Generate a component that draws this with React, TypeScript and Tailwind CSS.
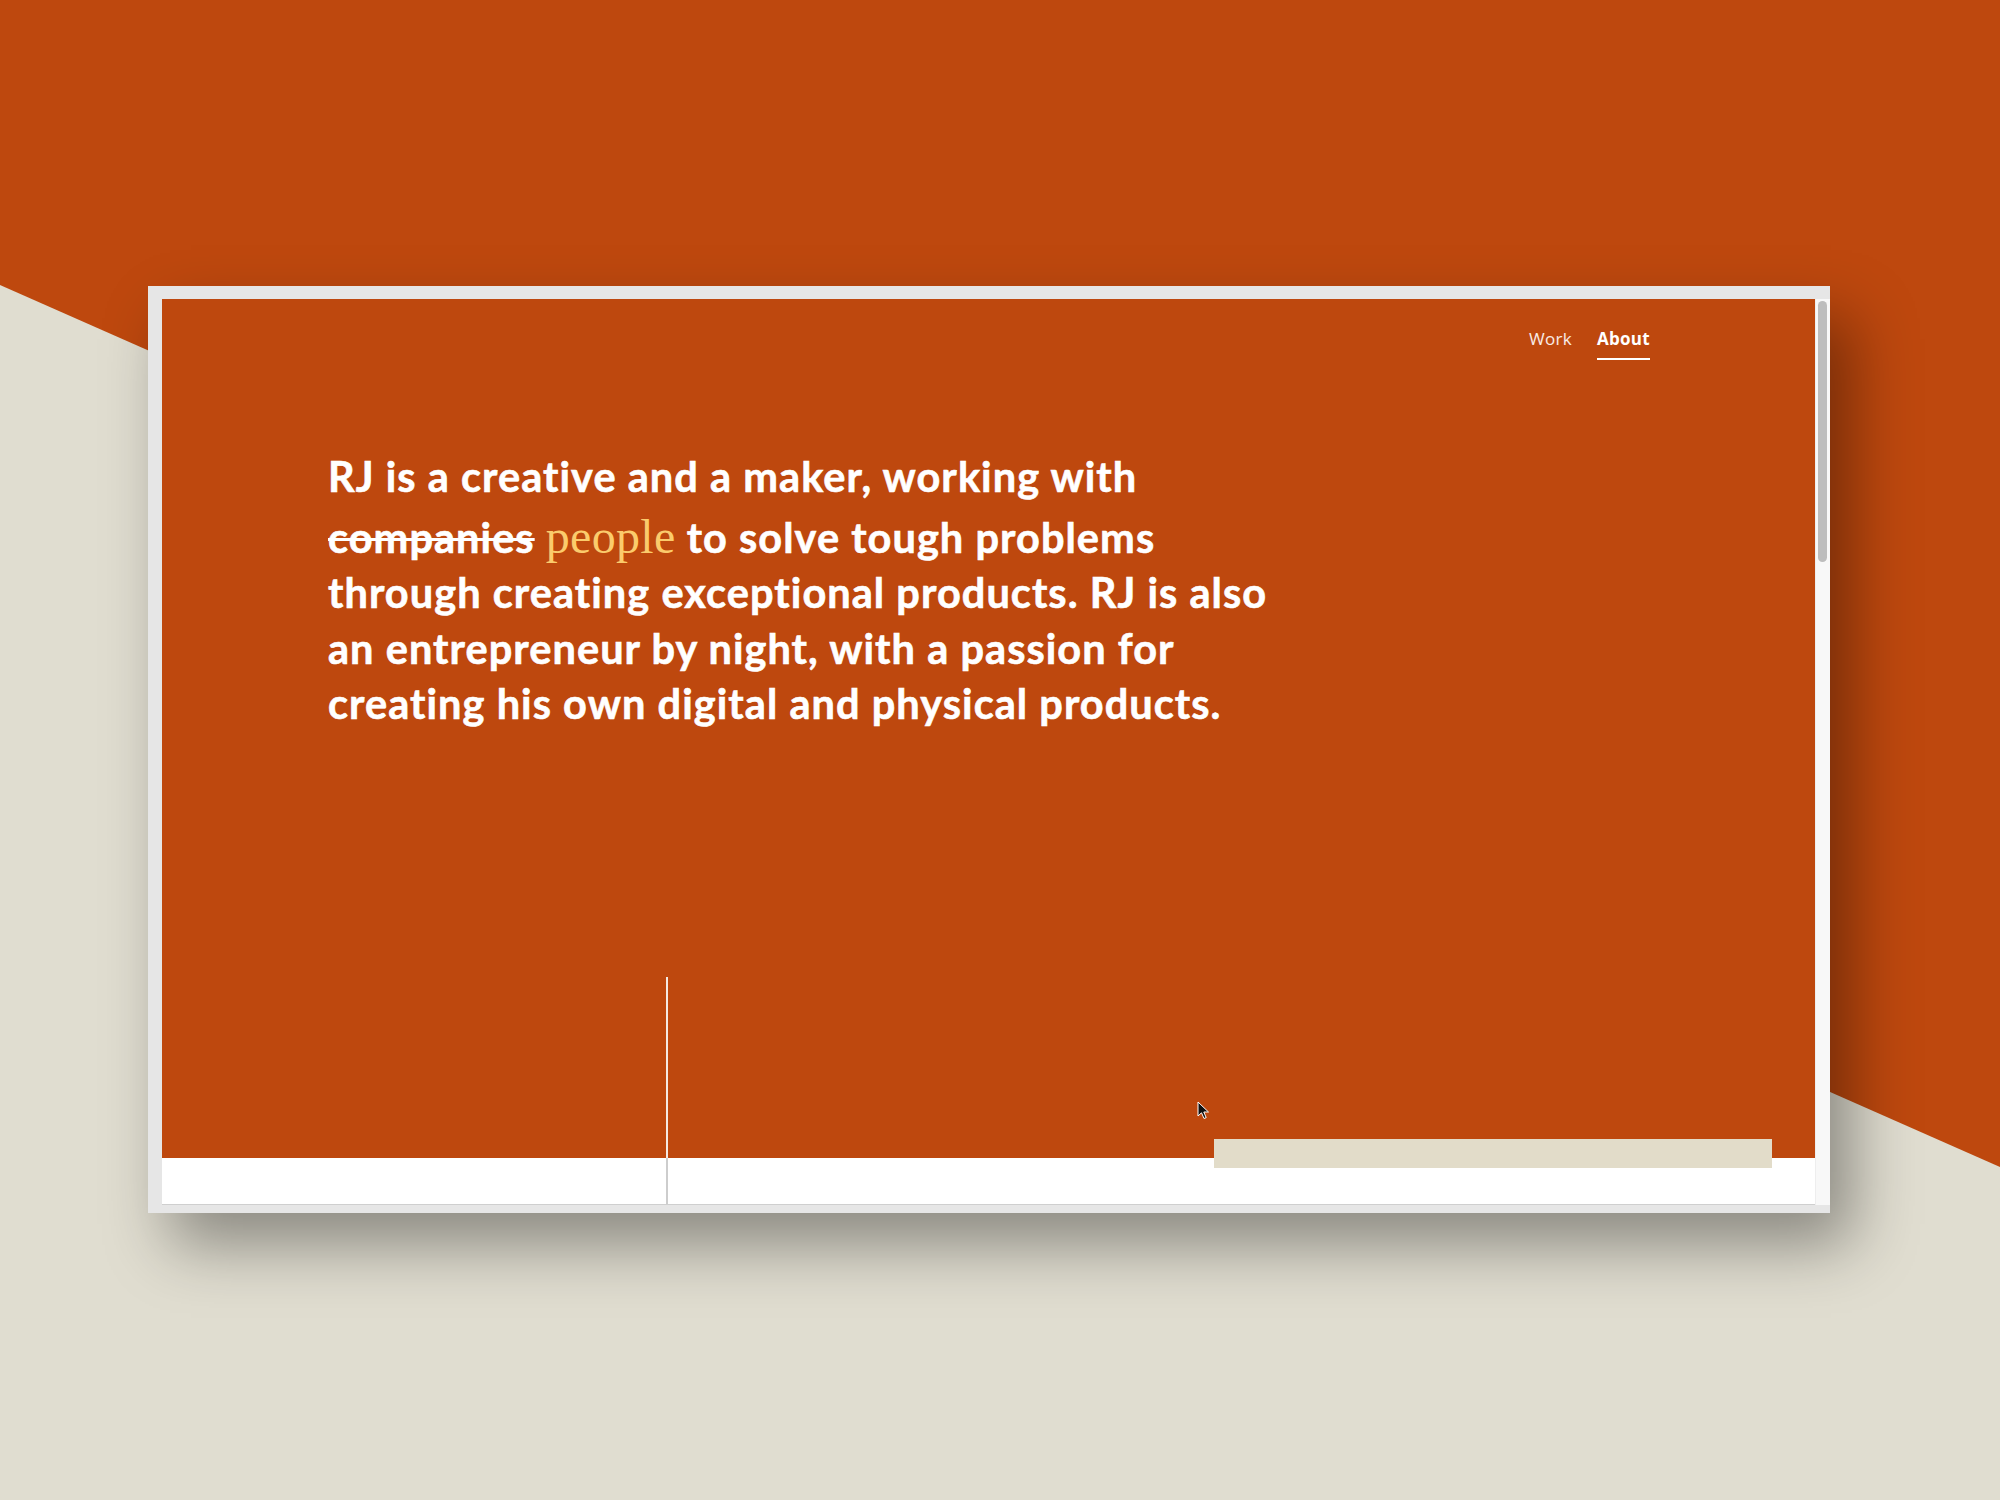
import React from "react";

function Cursor() {
  return (
    <svg width="13" height="19" viewBox="0 0 13 19" className="absolute left-[1035px] top-[802px]">
      <path d="M1 1 L1 15 L4.5 11.8 L7 17.5 L9.2 16.6 L6.8 11 L11.5 11 Z" fill="#111" stroke="#fff" strokeWidth="1" strokeLinejoin="round" />
    </svg>
  );
}

export default function App() {
  return (
    <div className="relative w-[2000px] h-[1500px] overflow-hidden bg-[#BE480E] pt-[286px] pl-[148px]">
      <svg className="absolute inset-0" width="2000" height="1500" viewBox="0 0 2000 1500">
        <polygon points="0,285 2000,1167 2000,1500 0,1500" fill="#E0DDD0" />
      </svg>

      <div className="relative w-[1682px] h-[927px] bg-[#E6E6E6] pt-[13px] pl-[14px] shadow-[22px_32px_60px_rgba(0,0,0,0.38)]">
        <div className="flex">
          <div className="relative w-[1653px] h-[906px] flex flex-col border-b border-[#cfcfcf]">
            <div className="relative h-[859px] bg-[#BE480E]">
              <nav className="flex justify-end gap-[25px] pr-[165px] pt-[28px] font-['Open_Sans',sans-serif] text-[17px] leading-[23px] tracking-[0.3px]">
                <a className="text-white/90 pb-[8px]">Work</a>
                <a className="text-white font-bold pb-[8px] border-b-2 border-white">About</a>
              </nav>
              <p className="ml-[166px] mt-[89px] font-['Lato',sans-serif] font-bold text-white text-[41.5px] leading-[55.5px] tracking-[1.05px] [-webkit-text-stroke:0.6px_#ffffff]">
                <span className="block">RJ is a creative and a maker, working with</span>
                <span className="block pt-[4px]">
                  <span className="line-through decoration-[3px]">companies</span>{" "}
                  <span className="font-['Liberation_Serif',serif] font-normal tracking-[0.3px] text-[#FBCB6C] text-[48px] [-webkit-text-stroke:0px_transparent]">people</span>{" "}
                  to solve tough problems
                </span>
                <span className="block">through creating exceptional products. RJ is also</span>
                <span className="block">an entrepreneur by night, with a passion for</span>
                <span className="block">creating his own digital and physical products.</span>
              </p>
              <div className="absolute left-[504px] top-[678px] bottom-0 w-[2px] bg-[#F4E9E2]" />
              <Cursor />
            </div>
            <div className="relative flex-1 bg-white">
              <div className="absolute left-[504px] top-0 bottom-0 w-[2px] bg-[#cdcdcd]" />
            </div>
            <div className="absolute left-[1052px] top-[840px] w-[558px] h-[29px] bg-[#E2DCC9]" />
          </div>
          <div className="w-[15px] h-[906px] bg-[#F8F8F8] border-l border-[#eeeeee] pt-[2px] pl-[2px]">
            <div className="w-[9px] h-[261px] rounded-full bg-[#BDBDBD]" />
          </div>
        </div>
      </div>
    </div>
  );
}
